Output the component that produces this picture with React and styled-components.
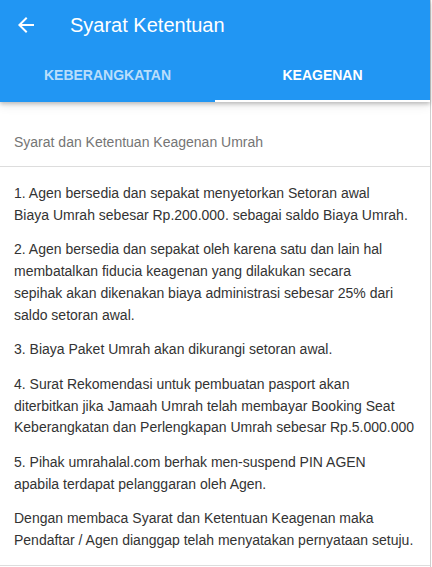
import React, { useState } from 'react';
import styled, { createGlobalStyle } from 'styled-components';

const GlobalStyle = createGlobalStyle`
  html, body {
    margin: 0;
    padding: 0;
    background: #ffffff;
  }
  body {
    font-family: 'Liberation Sans', Arial, sans-serif;
  }
`;

const Page = styled.div`
  width: 430px;
  min-height: 567px;
  border-right: 1px solid #cfcfcf;
  background: #fff;
`;

const Header = styled.header`
  background: #2196f3;
  box-shadow: 0 2px 4px rgba(0, 0, 0, 0.22), 0 4px 10px rgba(0, 0, 0, 0.08);
  position: relative;
  z-index: 1;
`;

const Toolbar = styled.div`
  height: 50px;
  display: flex;
  align-items: center;
  padding: 0 14px;
  gap: 32px;
`;

const BackButton = styled.button`
  width: 24px;
  height: 24px;
  padding: 0;
  border: none;
  background: transparent;
  color: #fff;
  display: flex;
  align-items: center;
  justify-content: center;
  cursor: pointer;
`;

const Title = styled.h1`
  margin: 0;
  color: #fff;
  font-size: 20px;
  font-weight: 400;
`;

const Tabs = styled.div`
  display: grid;
  grid-template-columns: 1fr 1fr;
  height: 52px;
`;

const Tab = styled.button`
  border: none;
  background: transparent;
  font-family: inherit;
  font-size: 14px;
  font-weight: 700;
  text-transform: uppercase;
  color: ${(p) => (p.$active ? '#ffffff' : 'rgba(255, 255, 255, 0.7)')};
  border-bottom: 2px solid ${(p) => (p.$active ? '#ffffff' : 'transparent')};
  padding: 0;
  cursor: pointer;
`;

const SubHeading = styled.div`
  padding: 30px 14px 14px;
  font-size: 14px;
  line-height: 20px;
  color: #757575;
  border-bottom: 1px solid #dddddd;
`;

const Body = styled.div`
  padding: 16px 14px 0;
  border-bottom: 1px solid #dddddd;
`;

const Para = styled.p`
  margin: 0 0 13px;
  font-size: 14px;
  line-height: 21.7px;
  color: #333333;
`;

const ArrowBack = () => (
  <svg width="24" height="24" viewBox="0 0 24 24" fill="currentColor">
    <path d="M20 11H7.83l5.59-5.59L12 4l-8 8 8 8 1.41-1.41L7.83 13H20v-2z" />
  </svg>
);

const terms = [
  ['1. Agen bersedia dan sepakat menyetorkan Setoran awal', 'Biaya Umrah sebesar Rp.200.000. sebagai saldo Biaya Umrah.'],
  [
    '2. Agen bersedia dan sepakat oleh karena satu dan lain hal',
    'membatalkan fiducia keagenan yang dilakukan secara',
    'sepihak akan dikenakan biaya administrasi sebesar 25% dari',
    'saldo setoran awal.',
  ],
  ['3. Biaya Paket Umrah akan dikurangi setoran awal.'],
  [
    '4. Surat Rekomendasi untuk pembuatan pasport akan',
    'diterbitkan jika Jamaah Umrah telah membayar Booking Seat',
    'Keberangkatan dan Perlengkapan Umrah sebesar Rp.5.000.000',
  ],
  ['5. Pihak umrahalal.com berhak men-suspend PIN AGEN', 'apabila terdapat pelanggaran oleh Agen.'],
  ['Dengan membaca Syarat dan Ketentuan Keagenan maka', 'Pendaftar / Agen dianggap telah menyatakan pernyataan setuju.'],
];

export default function App() {
  const [tab, setTab] = useState(1);

  return (
    <>
      <GlobalStyle />
      <Page>
        <Header>
          <Toolbar>
            <BackButton aria-label="Kembali">
              <ArrowBack />
            </BackButton>
            <Title>Syarat Ketentuan</Title>
          </Toolbar>
          <Tabs>
            <Tab $active={tab === 0} onClick={() => setTab(0)}>Keberangkatan</Tab>
            <Tab $active={tab === 1} onClick={() => setTab(1)}>Keagenan</Tab>
          </Tabs>
        </Header>

        <SubHeading>Syarat dan Ketentuan Keagenan Umrah</SubHeading>

        <Body>
          {terms.map((lines, i) => (
            <Para key={i}>
              {lines.map((line, j) => (
                <React.Fragment key={j}>
                  {j > 0 && <br />}
                  {line}
                </React.Fragment>
              ))}
            </Para>
          ))}
        </Body>
      </Page>
    </>
  );
}
